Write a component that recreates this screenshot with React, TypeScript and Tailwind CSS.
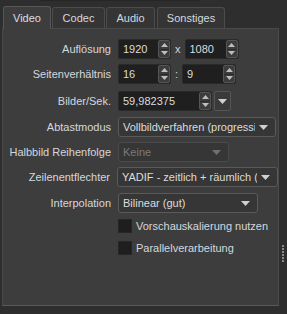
import React from "react";

const font = { fontFamily: '"Liberation Sans", Arial, sans-serif' };

function UpDown() {
  return (
    <div className="w-[12px] h-full flex flex-col rounded-[2px] border border-[#555] bg-[#3c3c3c]">
      <div className="flex-1 flex items-center justify-center">
        <svg width="7" height="4" viewBox="0 0 7 4"><path d="M0 4 L3.5 0 L7 4 Z" fill="#bdbdbd" /></svg>
      </div>
      <div className="h-px bg-[#2a2a2a]" />
      <div className="flex-1 flex items-center justify-center">
        <svg width="7" height="4" viewBox="0 0 7 4"><path d="M0 0 L3.5 4 L7 0 Z" fill="#bdbdbd" /></svg>
      </div>
    </div>
  );
}

function Spin({ value, w }: { value: string; w: string }) {
  return (
    <div className={`${w} h-[20px] flex items-stretch bg-[#1f1f1f] rounded-[2px] border border-[#2a2a2a]`}>
      <div className="flex-1 flex items-center pl-[4px] text-[#dcdcdc]">{value}</div>
      <UpDown />
    </div>
  );
}

function Arrow({ color = "#d0d0d0" }: { color?: string }) {
  return (
    <svg width="9" height="5" viewBox="0 0 9 5"><path d="M0 0 L9 0 L4.5 5 Z" fill={color} /></svg>
  );
}

function Combo({ value, w, disabled }: { value: string; w: string; disabled?: boolean }) {
  return (
    <div
      className={`${w} h-[20px] flex items-center rounded-[3px] border ${
        disabled ? "border-[#4a4a4a] text-[#7a7a7a]" : "border-[#5a5a5a] text-[#dcdcdc]"
      } bg-[#363636] pl-[4px] pr-[7px]`}
    >
      <div className="flex-1 overflow-hidden whitespace-nowrap">{value}</div>
      <div className="ml-[4px] flex items-center">
        <Arrow color={disabled ? "#707070" : "#d0d0d0"} />
      </div>
    </div>
  );
}

function Label({ children }: { children: React.ReactNode }) {
  return <div className="w-[108px] text-right text-[#d4d8de] whitespace-nowrap">{children}</div>;
}

function Row({ label, children, mt }: { label?: string; children: React.ReactNode; mt: string }) {
  return (
    <div className={`flex items-center ${mt}`}>
      <Label>{label}</Label>
      <div className="ml-[7px] flex items-center">{children}</div>
    </div>
  );
}

function Check({ label, mt }: { label: string; mt: string }) {
  return (
    <div className={`flex items-center ${mt}`}>
      <div className="w-[108px] shrink-0" />
      <div className="ml-[7px] w-[14px] h-[14px] shrink-0 bg-[#1e1e1e] border border-[#262626]" />
      <div className="ml-[4px] text-[#d4d8de] whitespace-nowrap">{label}</div>
    </div>
  );
}

export default function App() {
  return (
    <div className="w-[287px] h-[314px] bg-[#2e2e2e] flex text-[11px] leading-none relative overflow-hidden" style={font}>
      <div className="absolute top-0 left-[40px] w-[160px] h-px bg-[#262626]" />
      <div className="flex flex-col w-[279px]">
        <div className="h-[28px] flex items-end pl-[3px]">
          <div className="w-[48px] h-[23px] flex items-center justify-center bg-[#3d3d3d] border border-b-0 border-[#575757] rounded-t-[3px] text-[#dadde2] relative top-px">
            Video
          </div>
          <div className="ml-[1px] w-[53px] h-[21px] flex items-center justify-center bg-[#353535] border border-b-0 border-[#4c4c4c] rounded-t-[3px] text-[#d4d8de]">
            Codec
          </div>
          <div className="ml-[1px] w-[49px] h-[21px] flex items-center justify-center bg-[#353535] border border-b-0 border-[#4c4c4c] rounded-t-[3px] text-[#d4d8de]">
            Audio
          </div>
          <div className="ml-[2px] w-[68px] h-[21px] flex items-center justify-center bg-[#353535] border border-b-0 border-[#4c4c4c] rounded-t-[3px] text-[#d4d8de]">
            Sonstiges
          </div>
        </div>
        <div className="ml-[2px] h-[278px] bg-[#3d3d3d] border border-[#4a4a4a] border-b-[#5a5a5a] pt-[10px]">
          <Row label="Auflösung" mt="mt-0">
            <Spin value="1920" w="w-[53px]" />
            <span className="mx-[4px] text-[#d4d8de]">x</span>
            <Spin value="1080" w="w-[54px]" />
          </Row>
          <Row label="Seitenverhältnis" mt="mt-[5px]">
            <Spin value="16" w="w-[53px]" />
            <span className="mx-[4px] text-[#d4d8de]">:</span>
            <Spin value="9" w="w-[54px]" />
          </Row>
          <Row label="Bilder/Sek." mt="mt-[7px]">
            <Spin value="59,982375" w="w-[94px]" />
            <div className="ml-[2px] w-[17px] h-[20px] flex items-center justify-center rounded-[2px] border border-[#555] bg-[#3a3a3a]">
              <Arrow />
            </div>
          </Row>
          <Row label="Abtastmodus" mt="mt-[6px]">
            <Combo value="Vollbildverfahren (progressiv)" w="w-[158px]" />
          </Row>
          <Row label="Halbbild Reihenfolge" mt="mt-[5px]">
            <Combo value="Keine" w="w-[111px]" disabled />
          </Row>
          <Row label="Zeilenentflechter" mt="mt-[5px]">
            <Combo value="YADIF - zeitlich + räumlich (alle)" w="w-[161px]" />
          </Row>
          <Row label="Interpolation" mt="mt-[6px]">
            <Combo value="Bilinear (gut)" w="w-[140px]" />
          </Row>
          <Check label="Vorschauskalierung nutzen" mt="mt-[6px]" />
          <Check label="Parallelverarbeitung" mt="mt-[8px]" />
        </div>
      </div>
      <div className="flex-1 flex flex-col items-center pt-[245px]">
        <div className="flex flex-col gap-[1px]">
          {[0, 1, 2, 3, 4, 5].map((i) => (
            <div key={i} className="w-[2px] h-[2px] bg-[#8a8a8a]" />
          ))}
        </div>
      </div>
    </div>
  );
}
